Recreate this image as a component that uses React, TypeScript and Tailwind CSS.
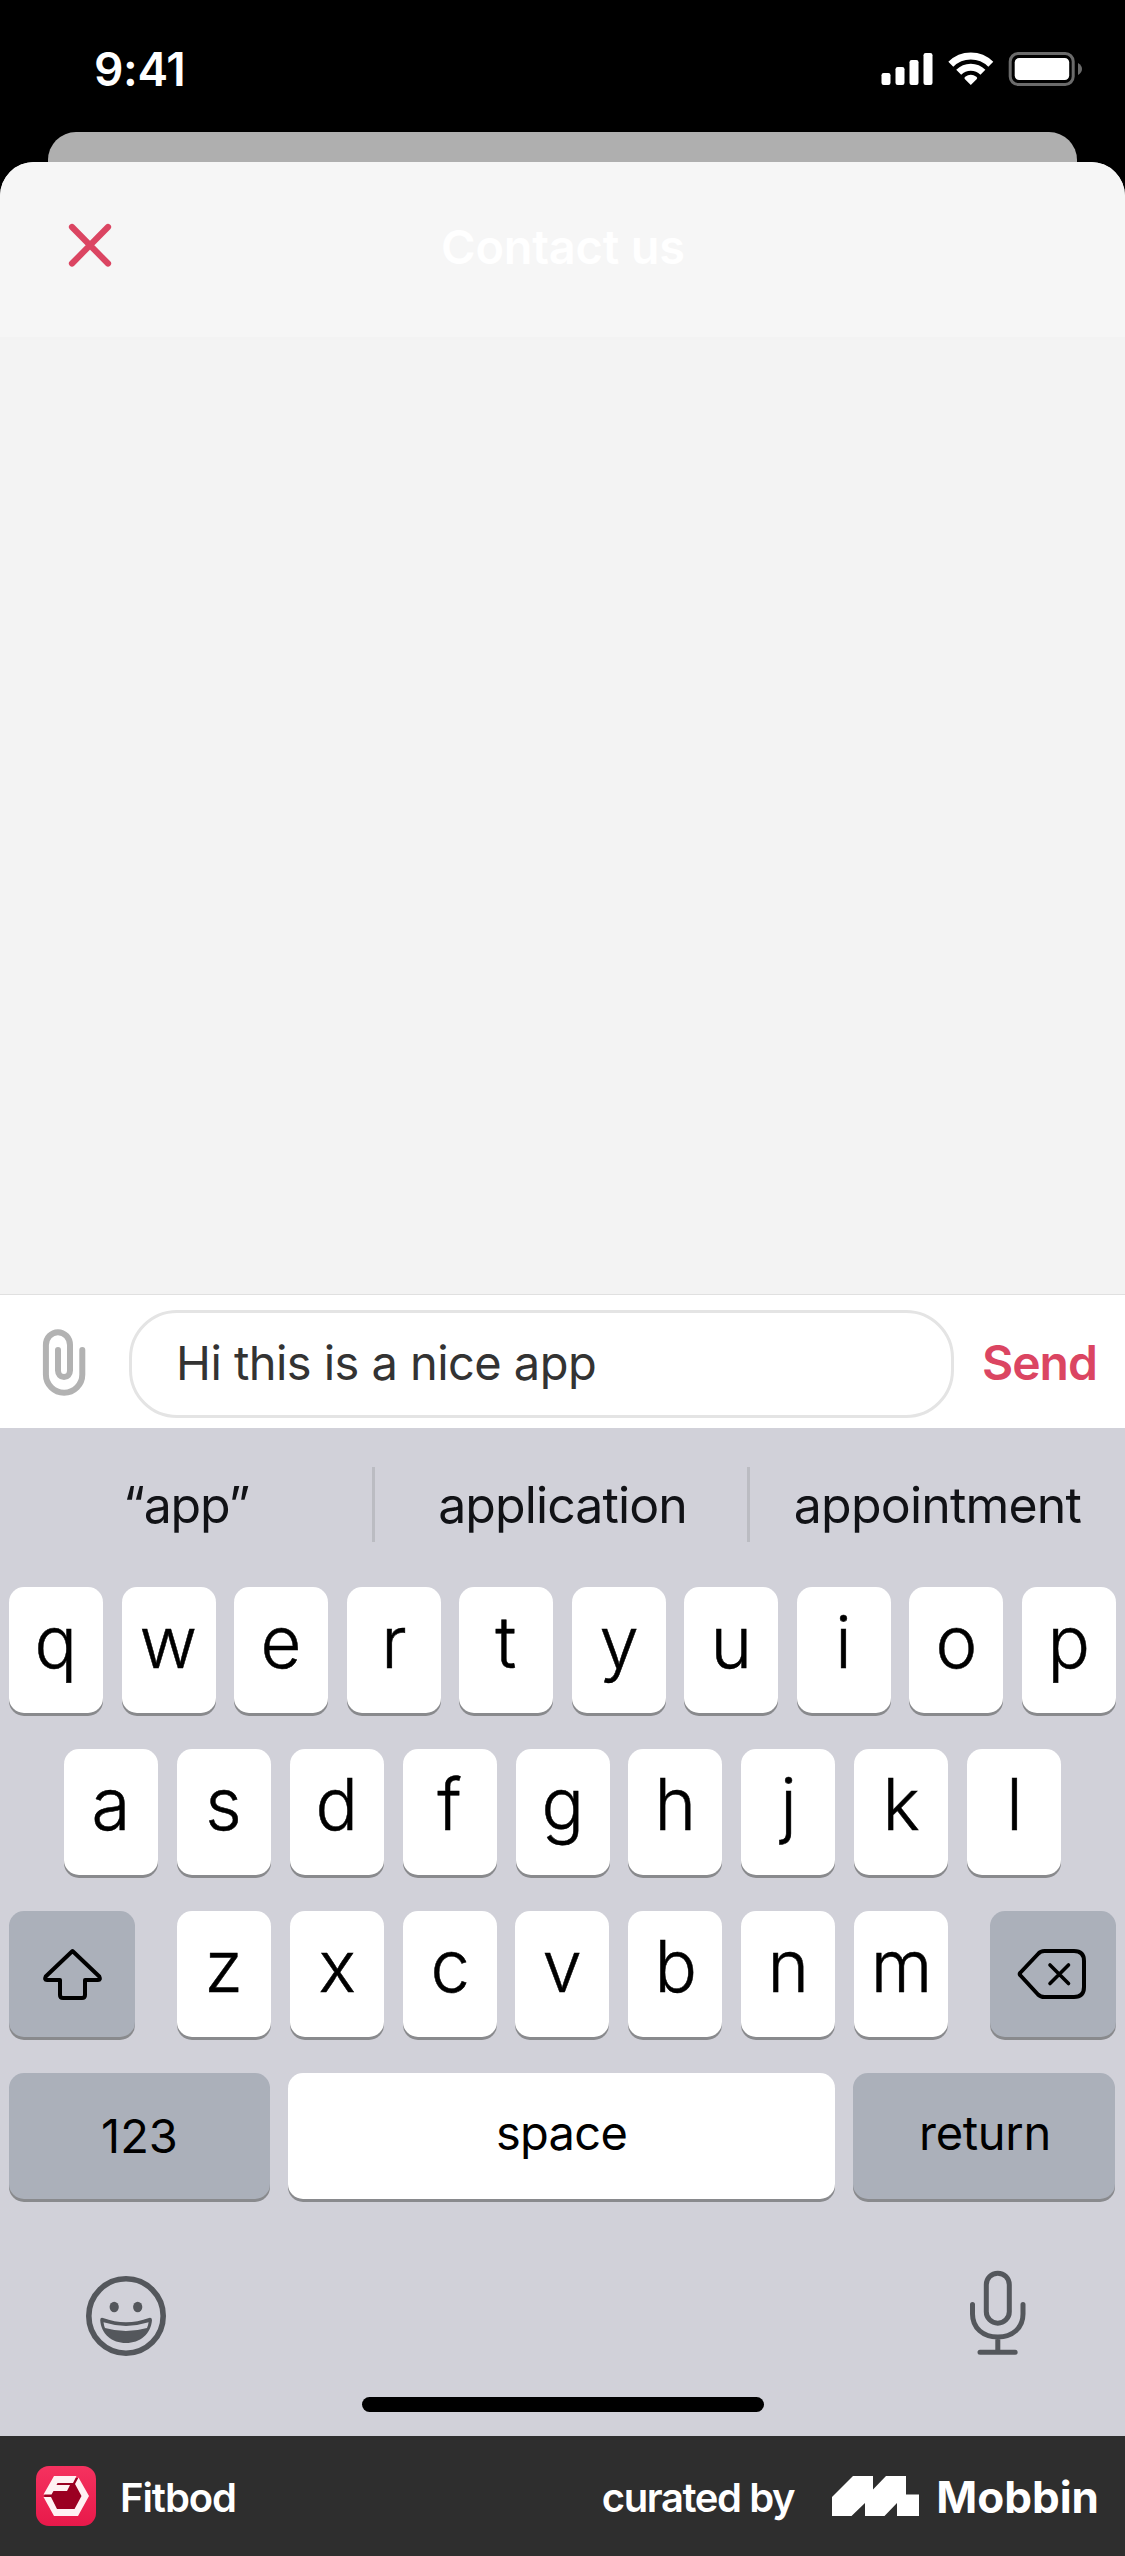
import type { ReactNode } from "react";

function StatusIcons() {
  return (
    <svg className="block" width="202" height="36" viewBox="882 51 202 36">
      <g fill="#fff">
        <rect x="882.5" y="73" width="9" height="12" rx="2.2" />
        <rect x="896.5" y="67" width="9" height="18" rx="2.2" />
        <rect x="910.5" y="60" width="9" height="25" rx="2.2" />
        <rect x="924.5" y="53" width="9" height="32" rx="2.2" />
        <path d="M971.8 85 L966 79.2 Q964.6 77.8 966.2 76.7 Q971.8 73 977.4 76.7 Q979 77.8 977.6 79.2 Z" />
      </g>
      <g fill="none" stroke="#fff">
        <path d="M951.8 64.3 A28.3 28.3 0 0 1 991.8 64.3" strokeWidth="7" />
        <path d="M959.7 72.3 A17.1 17.1 0 0 1 983.9 72.3" strokeWidth="7" />
      </g>
      <rect x="1011.2" y="53.5" width="63" height="31" rx="8" fill="none" stroke="#6b6b6b" strokeWidth="3" />
      <rect x="1015.7" y="58" width="54.5" height="22" rx="4.5" fill="#fff" />
      <path d="M1079 63 Q1083 65.5 1083 69 Q1083 72.5 1079 75 Z" fill="#6b6b6b" />
    </svg>
  );
}

function Paperclip() {
  return (
    <svg className="block" width="44" height="68" viewBox="42 1328 44 68" fill="none" stroke="#b2b2b2" strokeWidth="6" strokeLinecap="round">
      <path d="M82.3 1350 V1374.5 A18.2 18.2 0 0 1 45.9 1374.5 V1345 A12 12.8 0 0 1 70 1345 V1370.5 A6 6.5 0 0 1 58 1370.5 V1350" />
    </svg>
  );
}

function Shift() {
  return (
    <svg className="block" width="62" height="56" viewBox="42 1947 62 56" fill="none" stroke="#000" strokeWidth="4" strokeLinejoin="round">
      <path d="M72.5 1951 L99.3 1976.5 Q101 1980 98 1980 H85 V1995 Q85 1998 82 1998 H63 Q60 1998 60 1995 V1980 H47 Q44 1980 45.7 1976.5 Z" />
    </svg>
  );
}

function Backspace() {
  return (
    <svg className="block" width="70" height="54" viewBox="1018 1948 70 54" fill="none" stroke="#000" strokeWidth="4" strokeLinecap="round" strokeLinejoin="round">
      <path d="M1021.5 1972.5 L1039 1954 Q1041.5 1951 1045.5 1951 H1075 Q1085 1951 1085 1961 V1987 Q1085 1997 1075 1997 H1045.5 Q1041.5 1997 1039 1994.5 L1021.5 1975.5 Q1020 1974 1021.5 1972.5 Z" />
      <path d="M1051 1965 L1069.5 1983.5 M1069.5 1965 L1051 1983.5" strokeWidth="3.6" />
    </svg>
  );
}

function Smiley() {
  return (
    <svg className="block" width="80" height="80" viewBox="86 2276 80 80" fill="#54575c">
      <circle cx="126" cy="2316" r="37.2" fill="none" stroke="#54575c" strokeWidth="5.6" />
      <ellipse cx="114.2" cy="2307" rx="4.6" ry="5.3" />
      <ellipse cx="137.7" cy="2307" rx="4.6" ry="5.3" />
      <path
        fillRule="evenodd"
        d="M100.2 2320 Q100.3 2317.3 103 2318 Q126 2326.5 149 2318 Q151.8 2317.3 152 2320 C151 2334 140 2343 126 2343 C112 2343 101 2334 100.2 2320 Z M103.5 2322.3 Q104 2326 105 2328 Q126 2334 147 2328 Q148.3 2325 148.6 2322.3 Q126 2329.5 103.5 2322.3 Z"
      />
    </svg>
  );
}

function Mic() {
  return (
    <svg className="block" width="56" height="86" viewBox="971 2270 56 86" fill="none" stroke="#54575c" strokeWidth="5" strokeLinecap="round">
      <rect x="987.3" y="2273.2" width="23" height="50" rx="11.5" />
      <path d="M973.5 2304.5 V2314 C973.5 2328 984 2337 998.8 2337 C1013.5 2337 1024 2328 1024 2314 V2304.5 M998.8 2337 V2352 M981 2352.3 H1016.2" />
    </svg>
  );
}

function FitbodLogo() {
  return (
    <svg className="block" width="60" height="60" viewBox="0 0 60 60">
      <defs>
        <linearGradient id="fitbod" x1="0" y1="0" x2="0" y2="1">
          <stop offset="0" stopColor="#f5325f" />
          <stop offset="1" stopColor="#e8194a" />
        </linearGradient>
      </defs>
      <rect width="60" height="60" rx="13" fill="url(#fitbod)" />
      <path d="M18 12 H42 L52 30 L42 48 H18 L8 30 Z" fill="#9b0022" />
      <path d="M18 10 H40.5 L37 17 H21.5 L20.5 19 H34 L31 25 H17.5 L15.5 28.5 H7.5 Z" fill="#fff1f3" />
      <path d="M42.5 11.5 L53 30 L42 50 H18 L7.5 31 H15 L21 43 H38.5 L45.5 30 L39 18 Z" fill="#fff1f3" />
    </svg>
  );
}

function MobbinLogo() {
  return (
    <svg className="block" width="87" height="40" viewBox="0 0 87 40" fill="#fff">
      <path d="M0 21 L21 0 H41 V13.5 L54 0 H74 V18.5 H87 V40 H65 V27 L52.5 40 H33 V27 L19.5 40 H0 Z" />
    </svg>
  );
}

function Key({ children }: { children: ReactNode }) {
  return (
    <div className="h-[126px] w-[94px] rounded-[15px] bg-white text-center text-[72px] leading-[110px] font-light text-black shadow-[0_3px_0_#898a8d] [-webkit-text-stroke:0.5px_#000]">
      <span className="inline-block scale-x-[0.98]">{children}</span>
    </div>
  );
}

function Letters({ letters }: { letters: string }) {
  return (
    <>
      {letters.split("").map((l) => (
        <Key key={l}>{l}</Key>
      ))}
    </>
  );
}

export default function App() {
  return (
    <div className="flex h-[2556px] w-[1125px] flex-col overflow-hidden bg-black font-['Inter',sans-serif]">
      <div className="flex h-[132px] items-start justify-between pt-[51px] pr-[42px] pl-[94px]">
        <span className="text-[46px] leading-[36px] font-semibold tracking-[-0.3px] text-white">9:41</span>
        <StatusIcons />
      </div>
      <div className="mx-[48px] h-[30px] rounded-t-[28px] bg-[#afafaf]" />

      <div className="flex flex-1 flex-col overflow-hidden rounded-t-[34px] bg-[#f3f3f3]">
        <header className="flex h-[175px] items-start bg-[#f6f6f6] pt-[61px] pl-[68px]">
          <svg className="block" width="44" height="44" viewBox="0 0 44 44" stroke="#db4562" strokeWidth="6.2" strokeLinecap="round">
            <path d="M4 4 L40 40.5 M40 4 L4 40.5" />
          </svg>
          <h1 className="ml-[329px] text-[47px] leading-[48px] font-semibold tracking-[-0.25px] whitespace-nowrap text-white">Contact us</h1>
        </header>

        <main className="flex-1" />

        <div className="flex h-[134px] items-start border-t border-[#e0e0e0] bg-white pl-[42px]">
          <div className="pt-[33px]">
            <Paperclip />
          </div>
          <div className="mt-[15px] ml-[43px] h-[108px] w-[825px] rounded-[48px] border-[3px] border-[#e4e4e4] pl-[44px] text-[47px] leading-[99px] tracking-[-0.55px] whitespace-nowrap text-[#333]">
            Hi this is a nice app
          </div>
          <div className="ml-[28px] pt-[15px] text-[48px] leading-[105px] font-semibold tracking-[-1px] text-[#db4562]">Send</div>
        </div>

        <section className="flex h-[1008px] flex-col bg-[#d1d1d9]">
          <div className="flex h-[159px] items-start pt-[39px] text-[50px] leading-[76px] text-[#111216]">
            <div className="w-[372px] text-center tracking-[-1.2px]">“app”</div>
            <div className="h-[75px] w-[3px] bg-[#bbbcc2]" />
            <div className="w-[372px] pl-[3px] text-center tracking-[-0.9px]">application</div>
            <div className="h-[75px] w-[3px] bg-[#bbbcc2]" />
            <div className="w-[375px] text-center tracking-[-0.8px]">appointment</div>
          </div>
          <div className="flex flex-col gap-[36px]">
            <div className="flex justify-between px-[9px]">
              <Letters letters="qwertyuiop" />
            </div>
            <div className="flex justify-between px-[64px]">
              <Letters letters="asdfghjkl" />
            </div>
            <div className="flex justify-between px-[9px]">
              <div className="flex h-[126px] w-[126px] items-center justify-center rounded-[15px] bg-[#abb0ba] pt-[2px] pl-[2px] shadow-[0_3px_0_#898a8d]">
                <Shift />
              </div>
              <div className="flex w-[771px] justify-between">
                <Letters letters="zxcvbnm" />
              </div>
              <div className="flex h-[126px] w-[126px] items-center justify-center rounded-[15px] bg-[#abb0ba] pt-[2px] pr-[2px] shadow-[0_3px_0_#898a8d]">
                <Backspace />
              </div>
            </div>
            <div className="flex gap-[18px] pl-[9px] text-center text-[47px] leading-[119px] text-black">
              <div className="h-[126px] w-[261px] rounded-[15px] bg-[#abb0ba] pt-[3px] shadow-[0_3px_0_#898a8d]">123</div>
              <div className="h-[126px] w-[547px] rounded-[15px] bg-white tracking-[-0.7px] shadow-[0_3px_0_#898a8d]">space</div>
              <div className="h-[126px] w-[262px] rounded-[15px] bg-[#abb0ba] pl-[2px] tracking-[-0.3px] shadow-[0_3px_0_#898a8d]">return</div>
            </div>
          </div>
          <div className="flex h-[198px] items-start justify-between pt-[71px] pr-[99px] pl-[86px]">
            <div className="pt-[6px]">
              <Smiley />
            </div>
            <Mic />
          </div>
          <div className="ml-[362px] h-[15px] w-[402px] rounded-full bg-black" />
        </section>

        <footer className="flex h-[120px] items-center bg-[#2e2e2e] pl-[36px] text-white">
          <FitbodLogo />
          <span className="ml-[24px] pt-[3px] text-[40px] leading-[50px] font-semibold tracking-[-1.1px]">Fitbod</span>
          <span className="ml-auto pt-[3px] text-[40px] leading-[50px] font-semibold tracking-[-1.4px]">curated by</span>
          <div className="ml-[38px]">
            <MobbinLogo />
          </div>
          <span className="mr-[26px] ml-[17px] pt-[2px] text-[44px] leading-[50px] font-bold">Mobbin</span>
        </footer>
      </div>
    </div>
  );
}
